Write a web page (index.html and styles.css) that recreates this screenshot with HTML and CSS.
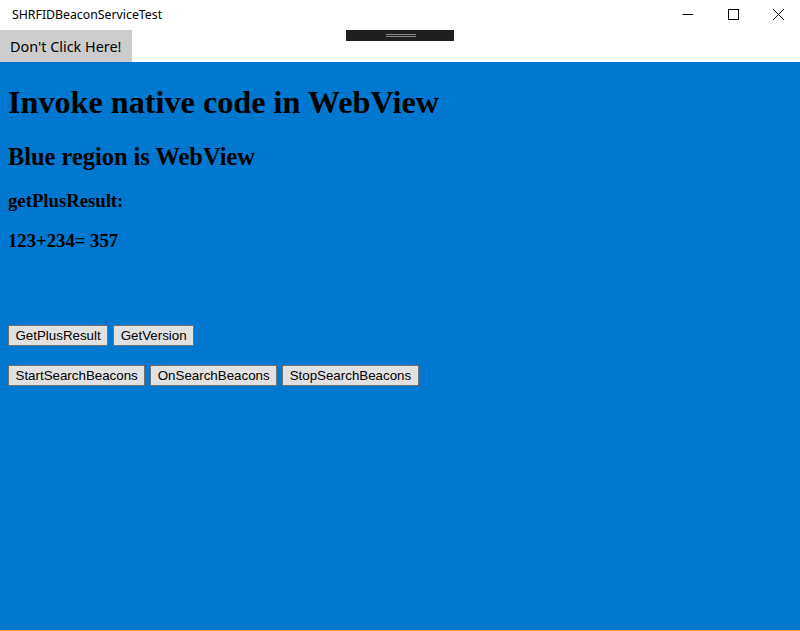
FILE: index.html
```html
<!DOCTYPE html>
<html>
<head>
<meta charset="utf-8">
<link rel="stylesheet" href="styles.css">
</head>
<body>
<div class="window">
  <div class="titlebar">
    <span class="title">SHRFIDBeaconServiceTest</span>
    <div class="controls">
      <span class="ctl"><svg width="12" height="12" viewBox="0 0 12 12"><path d="M0.5 6.5H11" stroke="#000" stroke-width="1"/></svg></span>
      <span class="ctl"><svg width="12" height="12" viewBox="0 0 12 12"><rect x="1.5" y="1.5" width="10" height="10" fill="none" stroke="#000" stroke-width="1"/></svg></span>
      <span class="ctl"><svg width="12" height="12" viewBox="0 0 12 12"><path d="M1 1L12 12M12 1L1 12" stroke="#000" stroke-width="1"/></svg></span>
    </div>
  </div>
  <div class="toolbar">
    <button class="appbtn">Don't Click Here!</button>
    <div class="handle"><span class="grip"></span></div>
  </div>
  <div class="webview">
    <h1>Invoke native code in WebView</h1>
    <h2>Blue region is WebView</h2>
    <h3>getPlusResult:</h3>
    <h3>123+234= 357</h3>
    <div class="row first">
      <button class="btn">GetPlusResult</button>
      <button class="btn">GetVersion</button>
    </div>
    <div class="row">
      <button class="btn">StartSearchBeacons</button>
      <button class="btn">OnSearchBeacons</button>
      <button class="btn">StopSearchBeacons</button>
    </div>
  </div>
</div>
</body>
</html>
```
FILE: styles.css
```css
html, body {
  margin: 0;
  padding: 0;
  height: 100%;
  overflow: hidden;
}
.window {
  width: 800px;
  height: 631px;
  display: flex;
  flex-direction: column;
  background: #fff;
}
.titlebar {
  height: 30px;
  display: flex;
  align-items: center;
  justify-content: space-between;
  flex-shrink: 0;
}
.title {
  font-family: "Noto Sans", sans-serif;
  font-size: 12.3px;
  color: #000;
  padding-left: 12px;
  position: relative;
  top: -1px;
}
.controls {
  display: flex;
  align-self: stretch;
}
.ctl {
  width: 45px;
  display: flex;
  align-items: center;
  justify-content: center;
  position: relative;
  top: -1px;
}
.ctl svg { display: block; }
.toolbar {
  height: 32px;
  flex-shrink: 0;
  position: relative;
  display: flex;
}
.appbtn {
  width: 132px;
  height: 32px;
  border: none;
  margin: 0;
  padding: 0 0 0 10px;
  text-align: left;
  background: #cccccc;
  font-family: "Noto Sans", sans-serif;
  font-size: 14.4px;
  color: #000;
}
.handle {
  position: absolute;
  left: 346px;
  top: 0;
  width: 108px;
  height: 11px;
  background: #1f1f1f;
  display: flex;
  align-items: center;
  justify-content: center;
}
.grip {
  width: 30px;
  height: 1px;
  border-top: 1px solid #8a8a8a;
  border-bottom: 1px solid #8a8a8a;
  margin-left: 1px;
}
.webview {
  flex: 1;
  background: #0078cf;
  border-bottom: 1px solid #e6a53a;
  padding: 0 8px;
  font-family: "Liberation Serif", "Times New Roman", serif;
  color: #000;
  overflow: hidden;
}
h1 {
  font-size: 32.2px;
  margin: 22px 0 21px;
}
h2 {
  font-size: 24.4px;
  margin: 22px 0 18.5px;
}
h3 {
  font-size: 18.72px;
  margin: 18.72px 0;
}
.row {
  display: flex;
  gap: 5px;
  margin-bottom: 19px;
}
.row.first {
  margin-top: 72.5px;
}
.btn {
  font-family: "Liberation Sans", Arial, sans-serif;
  font-size: 13.33px;
  height: 21px;
  padding: 0 6.5px;
  margin: 0;
  background: #e1e1e1;
  border: 1px solid #707070;
  border-radius: 0;
  color: #000;
}
```
